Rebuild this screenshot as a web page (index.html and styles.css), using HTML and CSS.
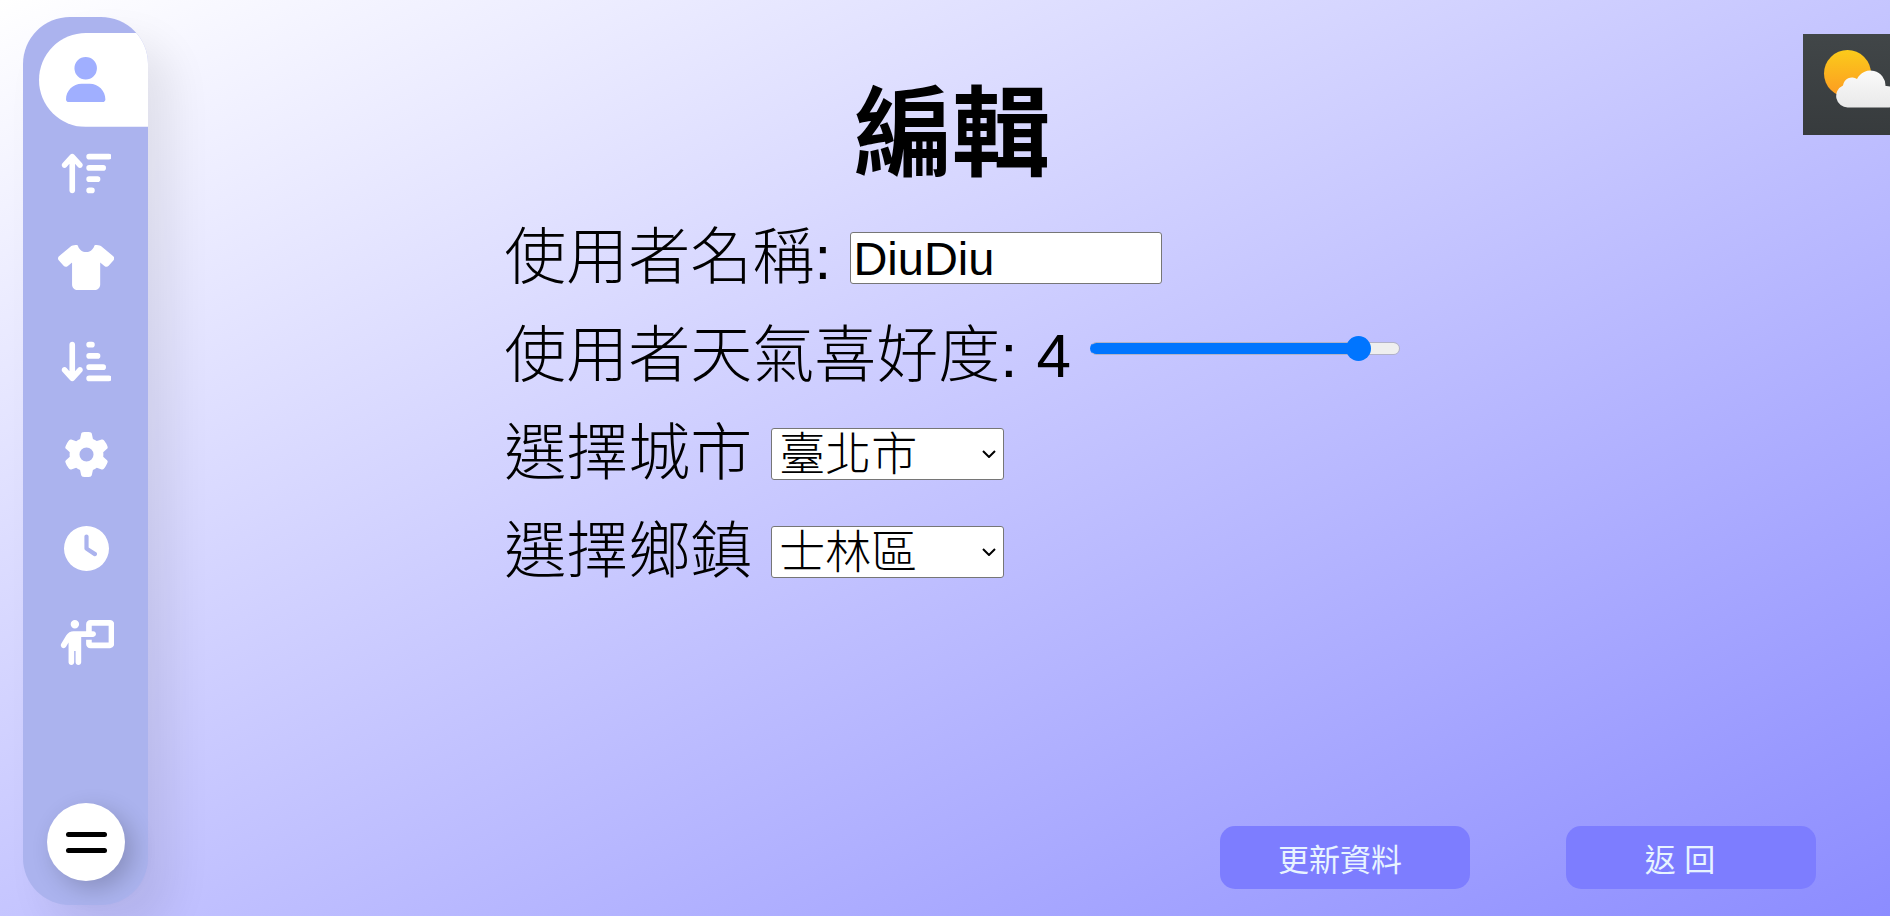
FILE: index.html
```html
<!DOCTYPE html>
<html lang="zh-Hant">
<head>
<meta charset="utf-8">
<meta name="viewport" content="width=device-width, initial-scale=1">
<title>編輯</title>
<link rel="stylesheet" href="styles.css">
</head>
<body>
<div class="page">
  <nav class="sidebar" aria-label="選單">
    <ul class="menu">
      <li class="menu-item"><a class="menu-link active" href="#user" aria-label="使用者"><svg class="icon" viewBox="0 0 448 512"><path d="M224 256A128 128 0 1 0 224 0a128 128 0 1 0 0 256zm-45.7 48C79.8 304 0 383.8 0 482.3C0 498.7 13.3 512 29.7 512H418.3c16.4 0 29.7-13.3 29.7-29.7C448 383.8 368.2 304 269.7 304H178.3z"/></svg></a></li>
      <li class="menu-item"><a class="menu-link" href="#up" aria-label="上排序"><svg class="icon" viewBox="0 0 576 512"><path d="M151.6 42.4C145.5 35.8 137 32 128 32s-17.5 3.8-23.6 10.4l-88 96c-11.9 13-11.1 33.3 2 45.2s33.3 11.1 45.2-2L96 146.3V448c0 17.7 14.3 32 32 32s32-14.3 32-32V146.3l32.4 35.4c11.9 13 32.2 13.9 45.2 2s13.9-32.2 2-45.2l-88-96zM320 480h32a32 32 0 0 0 0-64h-32a32 32 0 0 0 0 64zm0-128h96a32 32 0 0 0 0-64h-96a32 32 0 0 0 0 64zm0-128h160a32 32 0 0 0 0-64H320a32 32 0 0 0 0 64zm0-128h224a32 32 0 0 0 0-64H320a32 32 0 0 0 0 64z"/></svg></a></li>
      <li class="menu-item"><a class="menu-link" href="#clothes" aria-label="衣物"><svg class="icon" viewBox="0 0 640 512"><path d="M211.8 0c7.8 0 14.3 5.7 16.7 13.2C240.8 51.9 277.1 80 320 80s79.2-28.1 91.5-66.8C413.9 5.7 420.4 0 428.2 0h12.6c22.5 0 44.2 7.9 61.5 22.3L628.5 127.4c6.6 5.5 10.7 13.5 11.4 22.1s-2.1 17.1-7.8 23.6l-56 64c-11.4 13.1-31.2 14.6-44.6 3.5L480 197.7V448c0 35.3-28.7 64-64 64H224c-35.3 0-64-28.7-64-64V197.7l-51.5 42.9c-13.3 11.1-33.1 9.6-44.6-3.5l-56-64c-5.7-6.5-8.5-15-7.8-23.6s4.8-16.6 11.4-22.1L137.7 22.3C155 7.9 176.7 0 199.2 0h12.6z"/></svg></a></li>
      <li class="menu-item"><a class="menu-link" href="#down" aria-label="下排序"><svg class="icon" viewBox="0 0 576 512"><path transform="matrix(1 0 0 -1 0 512)" d="M151.6 42.4C145.5 35.8 137 32 128 32s-17.5 3.8-23.6 10.4l-88 96c-11.9 13-11.1 33.3 2 45.2s33.3 11.1 45.2-2L96 146.3V448c0 17.7 14.3 32 32 32s32-14.3 32-32V146.3l32.4 35.4c11.9 13 32.2 13.9 45.2 2s13.9-32.2 2-45.2l-88-96zM320 480h32a32 32 0 0 0 0-64h-32a32 32 0 0 0 0 64zm0-128h96a32 32 0 0 0 0-64h-96a32 32 0 0 0 0 64zm0-128h160a32 32 0 0 0 0-64H320a32 32 0 0 0 0 64zm0-128h224a32 32 0 0 0 0-64H320a32 32 0 0 0 0 64z"/></svg></a></li>
      <li class="menu-item"><a class="menu-link" href="#settings" aria-label="設定"><svg class="icon" viewBox="0 0 512 512"><path d="M495.9 166.6c3.2 8.7 .5 18.4-6.4 24.6l-43.3 39.4c1.1 8.3 1.7 16.8 1.7 25.4s-.6 17.1-1.7 25.4l43.3 39.4c6.9 6.2 9.6 15.9 6.4 24.6c-4.4 11.9-9.7 23.3-15.8 34.3l-4.7 8.1c-6.6 11-14 21.4-22.1 31.2c-5.9 7.2-15.7 9.6-24.5 6.8l-55.7-17.7c-13.4 10.3-28.2 18.9-44 25.4l-12.5 57.1c-2 9.1-9 16.3-18.2 17.8c-13.8 2.3-28 3.5-42.5 3.5s-28.7-1.2-42.5-3.5c-9.2-1.5-16.2-8.7-18.2-17.8l-12.5-57.1c-15.8-6.5-30.6-15.1-44-25.4L83.1 425.9c-8.8 2.8-18.6 .3-24.5-6.8c-8.1-9.8-15.5-20.2-22.1-31.2l-4.7-8.1c-6.1-11-11.4-22.4-15.8-34.3c-3.2-8.7-.5-18.4 6.4-24.6l43.3-39.4C64.6 273.1 64 264.6 64 256s.6-17.1 1.7-25.4L22.4 191.2c-6.9-6.2-9.6-15.9-6.4-24.6c4.4-11.9 9.7-23.3 15.8-34.3l4.7-8.1c6.6-11 14-21.4 22.1-31.2c5.9-7.2 15.7-9.6 24.5-6.8l55.7 17.7c13.4-10.3 28.2-18.9 44-25.4l12.5-57.1c2-9.1 9-16.3 18.2-17.8C227.3 1.2 241.5 0 256 0s28.7 1.2 42.5 3.5c9.2 1.5 16.2 8.7 18.2 17.8l12.5 57.1c15.8 6.5 30.6 15.1 44 25.4l55.7-17.7c8.8-2.8 18.6-.3 24.5 6.8c8.1 9.8 15.5 20.2 22.1 31.2l4.7 8.1c6.1 11 11.4 22.4 15.8 34.3zM256 336a80 80 0 1 0 0-160 80 80 0 1 0 0 160z"/></svg></a></li>
      <li class="menu-item"><a class="menu-link" href="#clock" aria-label="時間"><svg class="icon" viewBox="0 0 512 512"><path d="M256 0a256 256 0 1 1 0 512A256 256 0 1 1 256 0zM232 120V256c0 8 4 15.5 10.7 20l96 64c11 7.4 25.9 4.4 33.3-6.7s4.4-25.9-6.7-33.3L280 243.2V120c0-13.3-10.7-24-24-24s-24 10.7-24 24z"/></svg></a></li>
      <li class="menu-item"><a class="menu-link" href="#guide" aria-label="教學"><svg class="icon" viewBox="0 0 640 512"><path d="M192 96a48 48 0 1 0 0-96 48 48 0 1 0 0 96zm-8 384V352h16V480c0 17.7 14.3 32 32 32s32-14.3 32-32V192h56 64 16c17.7 0 32-14.3 32-32s-14.3-32-32-32H384V64H576V256H384V224H320v48c0 26.5 21.5 48 48 48H592c26.5 0 48-21.5 48-48V48c0-26.5-21.5-48-48-48H368c-26.5 0-48 21.5-48 48v80H243.1 177.1c-33.7 0-64.9 17.7-82.3 46.6l-58.3 97c-9.1 15.1-4.2 34.8 10.9 43.9s34.8 4.2 43.9-10.9L120 256.9V480c0 17.7 14.3 32 32 32s32-14.3 32-32z"/></svg></a></li>
    </ul>
    <button class="toggle" type="button" aria-label="展開選單"><span class="toggle-bar"></span><span class="toggle-bar"></span></button>
  </nav>

  <main class="content">
    <h1 class="title">編輯</h1>
    <form class="form" id="profile">
      <div class="row">
        <label class="label" for="name">使用者名稱:</label>
        <input class="field" id="name" type="text" value="DiuDiu">
      </div>
      <div class="row">
        <label class="label" for="liking">使用者天氣喜好度:</label>
        <output class="label" for="liking">4</output>
        <input class="slider" id="liking" type="range" min="-5" max="5" value="4">
      </div>
      <div class="row">
        <label class="label" for="city">選擇城市</label>
        <div class="picker">
          <select class="select" id="city"><option>臺北市</option></select>
          <svg class="chevron" viewBox="0 0 14 8"><path d="M1 1l6 6 6-6"/></svg>
        </div>
      </div>
      <div class="row">
        <label class="label" for="town">選擇鄉鎮</label>
        <div class="picker">
          <select class="select" id="town"><option>士林區</option></select>
          <svg class="chevron" viewBox="0 0 14 8"><path d="M1 1l6 6 6-6"/></svg>
        </div>
      </div>
    </form>
    <div class="actions">
      <button class="action" type="submit" form="profile">更新資料</button>
      <button class="action back" type="button">返 回</button>
    </div>
  </main>

  <div class="weather">
    <svg class="weather-art" viewBox="0 0 101 101" role="img" aria-label="多雲時晴">
      <defs>
        <linearGradient id="sky" x1="0" y1="0" x2="0" y2="1"><stop offset="0" stop-color="#414648"/><stop offset="1" stop-color="#373b3d"/></linearGradient>
        <linearGradient id="sun" x1="0" y1="0" x2="0" y2="1"><stop offset="0" stop-color="#fbcb1b"/><stop offset="1" stop-color="#fd9a22"/></linearGradient>
        <linearGradient id="cloud" x1="0" y1="0" x2="0" y2="1"><stop offset="0" stop-color="#fafafa"/><stop offset="1" stop-color="#e9e9e9"/></linearGradient>
      </defs>
      <rect width="101" height="101" fill="url(#sky)"/>
      <circle cx="44.500" cy="39.500" r="23.500" fill="url(#sun)"/>
      <path fill="url(#cloud)" d="M45 73.500a11.500 11.500 0 0 1-5-22a9 9 0 0 1 14-6.500a15 15 0 0 1 28.500 7a11 11 0 0 1 4 21.500z"/>
    </svg>
  </div>
</div>
</body>
</html>
```
FILE: styles.css
```css
* {
  box-sizing: border-box;
}

body {
  margin: 0;
  font-family: "Liberation Sans", "Noto Sans CJK TC", sans-serif;
  font-weight: 300;
  color: #000;
}

.page {
  position: relative;
  display: flex;
  min-height: 100vh;
  padding: 17px 0 11px 23px;
  background: linear-gradient(to bottom right, #fff, #8c8cff);
  overflow: hidden;
}

/* Sidebar */
.sidebar {
  display: flex;
  flex-direction: column;
  justify-content: space-between;
  flex: 0 0 125px;
  padding: 16px 0 24px 16px;
  border-radius: 47px;
  background: #abb3ee;
  box-shadow: 24px 24px 40px rgba(0, 0, 0, 0.08);
}

.menu {
  display: flex;
  flex-direction: column;
  height: 656px;
  margin: 0;
  padding: 0;
  list-style: none;
}

.menu-item {
  flex: 1;
}

.menu-link {
  display: flex;
  align-items: center;
  justify-content: center;
  height: 100%;
  padding-right: 15px;
  color: #fff;
}

.menu-link.active {
  border-radius: 47px 0 0 47px;
  background: #fff;
  color: #a0afff;
}

.menu-item:first-child .menu-link {
  clip-path: inset(-16px 0 0 0 round 0 47px 0 0);
}

.icon {
  height: 45px;
  fill: currentColor;
}

.toggle {
  display: flex;
  flex-direction: column;
  align-items: center;
  justify-content: center;
  gap: 11px;
  width: 78px;
  height: 78px;
  margin-left: 8px;
  padding: 0;
  border: 0;
  border-radius: 50%;
  background: #fff;
  box-shadow: 8px 8px 24px rgba(0, 0, 0, 0.2);
}

.toggle-bar {
  width: 41px;
  height: 5px;
  border-radius: 3px;
  background: #000;
}

/* Form */
.content {
  display: flex;
  flex: 1;
  flex-direction: column;
  align-items: center;
  padding: 42px 74px 16px 0;
}

.title {
  margin: 0 60px 4px 0;
  font-size: 98px;
  font-weight: 700;
  line-height: 150px;
}

.form {
  display: flex;
  flex-direction: column;
  gap: 8px;
  margin-right: 60px;
}

.row {
  display: flex;
  align-items: center;
  gap: 19px;
}

.label {
  font-size: 62px;
  line-height: 90px;
}

.field {
  width: 312px;
  height: 52px;
  padding: 0 2px;
  border: 1px solid #767676;
  border-radius: 3px;
  background: #fff;
  font: inherit;
  font-size: 47px;
}

.slider {
  width: 310px;
  height: 25px;
  margin: 0 0 16px;
  background: none;
  appearance: none;
}

.slider::-webkit-slider-runnable-track {
  height: 13px;
  border: 1px solid #b2b2c8;
  border-left-color: #0075ff;
  border-radius: 7px;
  background: linear-gradient(to right, #0075ff 90%, #efefef 90%) border-box;
}

.slider::-webkit-slider-thumb {
  width: 25px;
  height: 25px;
  margin-top: -7px;
  border-radius: 50%;
  background: #0075ff;
  appearance: none;
}

.picker {
  position: relative;
}

.select {
  display: block;
  width: 233px;
  height: 52px;
  padding: 0 7px;
  border: 1px solid #767676;
  border-radius: 3px;
  background: #fff;
  color: #000;
  font: inherit;
  font-size: 46px;
  line-height: 50px;
  appearance: none;
}

.chevron {
  position: absolute;
  top: 22px;
  right: 8px;
  width: 14px;
  height: 8px;
  fill: none;
  stroke: #000;
  stroke-width: 2;
  pointer-events: none;
}

.actions {
  display: flex;
  align-self: flex-end;
  gap: 96px;
  margin-top: auto;
}

.action {
  width: 250px;
  height: 63px;
  padding: 0 10px 0 0;
  border: 0;
  border-radius: 15px;
  background: #7d7dff;
  color: #e8f4ff;
  font: inherit;
  font-size: 31px;
  font-weight: 400;
}

.action.back {
  padding-right: 22px;
}

/* Weather tile, cut by the right edge of the window */
.weather {
  position: absolute;
  top: 34px;
  right: 0;
  width: 87px;
  height: 101px;
  overflow: hidden;
}

.weather-art {
  display: block;
  width: 101px;
  height: 101px;
}
```
